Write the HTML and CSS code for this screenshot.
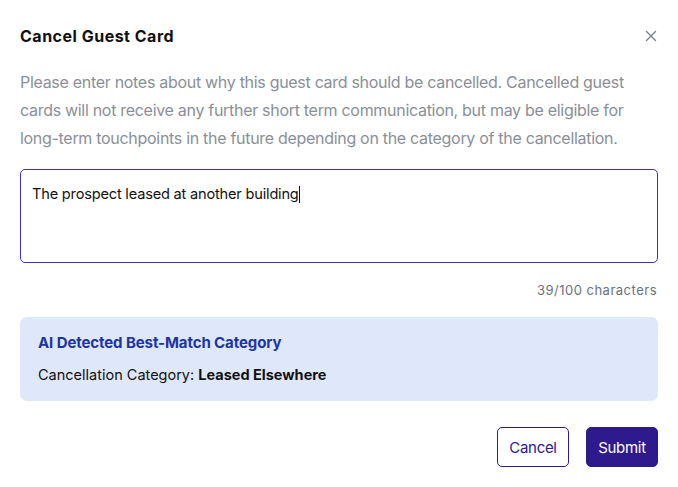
FILE: index.html
```html
<!DOCTYPE html>
<html>
<head>
<meta charset="utf-8">
<link rel="stylesheet" href="styles.css">
</head>
<body>
<div class="modal">
  <div class="header">
    <h1 class="title">Cancel Guest Card</h1>
    <button class="close" aria-label="Close">
      <svg width="12" height="12" viewBox="0 0 12 12"><path d="M1.5 1.5L10.5 10.5M10.5 1.5L1.5 10.5" stroke="#7b818c" stroke-width="1.4" stroke-linecap="round"/></svg>
    </button>
  </div>
  <p class="desc">Please enter notes about why this guest card should be cancelled. Cancelled guest cards will not receive any further short term communication, but may be eligible for long-term touchpoints in the future depending on the category of the cancellation.</p>
  <div class="notes"><span>The prospect leased at another building</span><span class="caret"></span></div>
  <div class="counter">39/100 characters</div>
  <div class="ai">
    <div class="ai-title">AI Detected Best-Match Category</div>
    <div class="ai-line">Cancellation Category: <strong>Leased Elsewhere</strong></div>
  </div>
  <div class="actions">
    <button class="btn btn-outline">Cancel</button>
    <button class="btn btn-primary">Submit</button>
  </div>
</div>
</body>
</html>
```
FILE: styles.css
```css
* { box-sizing: border-box; }
body {
  margin: 0;
  background: #fff;
  font-family: "Inter", "Liberation Sans", sans-serif;
  color: #111;
}
.modal {
  padding: 23px 20px 20px;
  display: flex;
  flex-direction: column;
}
.header {
  display: flex;
  justify-content: space-between;
  align-items: center;
  height: 26px;
}
.title {
  margin: 0;
  font-size: 16px;
  font-weight: 700;
  letter-spacing: 0.5px;
  color: #111;
}
.close {
  border: 0;
  background: none;
  padding: 0;
  margin-right: 1px;
  display: flex;
}
.desc {
  margin: 19px 0 0;
  font-size: 16px;
  line-height: 28px;
  color: #8a8f98;
  letter-spacing: -0.3px;
}
.notes {
  margin-top: 17px;
  height: 94px;
  border: 1px solid #4232b8;
  border-radius: 5px;
  padding: 14px 11px;
  font-size: 14.6px;
  line-height: 20px;
  color: #111;
  letter-spacing: -0.2px;
  display: flex;
  align-items: flex-start;
}
.caret {
  display: inline-block;
  width: 1px;
  height: 17px;
  background: #111;
  margin-top: 2px;
}
.counter {
  margin-top: 19px;
  text-align: right;
  font-size: 13px;
  color: #6b7280;
  letter-spacing: 0.5px;
  padding-right: 1px;
}
.ai {
  margin-top: 19px;
  background: #dfe7fb;
  border-radius: 7px;
  padding: 16px 18px 16px;
  height: 84px;
}
.ai-title {
  font-size: 15px;
  font-weight: 700;
  color: #1d35a3;
  line-height: 19px;
  letter-spacing: -0.1px;
}
.ai-line {
  margin-top: 13px;
  font-size: 14.5px;
  line-height: 19px;
  color: #111;
}
.ai-line strong { font-weight: 700; }
.actions {
  margin-top: 26px;
  display: flex;
  justify-content: flex-end;
  gap: 17px;
}
.btn {
  height: 40px;
  width: 72px;
  border-radius: 5px;
  font-family: inherit;
  font-size: 15px;
  letter-spacing: -0.3px;
}
.btn-outline {
  background: #fff;
  border: 1px solid #2d1a8e;
  color: #2d1a8e;
}
.btn-primary {
  background: #2e1a8c;
  border: 1px solid #2e1a8c;
  color: #fff;
}
```
